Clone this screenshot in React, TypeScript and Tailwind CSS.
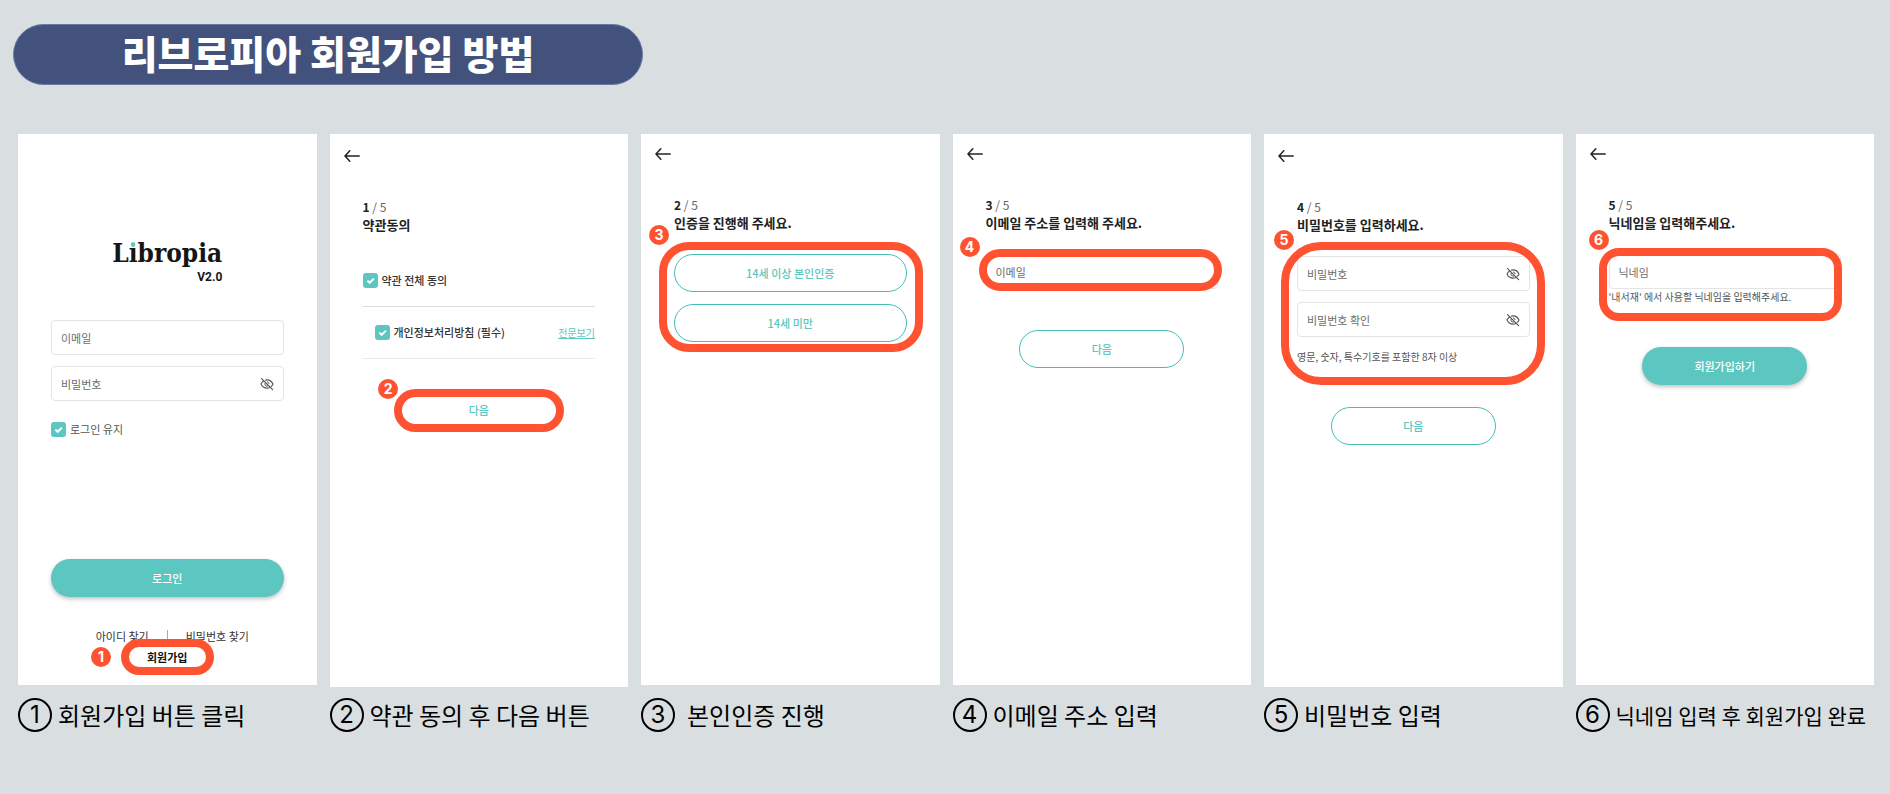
import { ReactNode } from "react";
import { clsx } from "clsx";

interface StepProps {
  number: string;
  caption: string;
  captionClass?: string;
  children: ReactNode;
}

const Step = ({ number, caption, captionClass = "gap-1.5 text-2xl", children }: StepProps) => (
  <figure className="flex min-w-0 flex-col">
    <div className="min-h-[553px]">{children}</div>
    <figcaption className={clsx("mt-[11px] flex items-center whitespace-nowrap text-black", captionClass)}>
      <span className="flex size-[34px] shrink-0 items-center justify-center rounded-full border-2 border-black font-[Inter] text-2xl leading-none">
        {number}
      </span>
      <span className="leading-8">{caption}</span>
    </figcaption>
  </figure>
);

const BackButton = () => (
  <button type="button" aria-label="뒤로" className="mx-[14px] block">
    <svg viewBox="0 0 16 12" className="h-3 w-4" fill="none" stroke="#222" strokeWidth="1.5" strokeLinecap="round" strokeLinejoin="round">
      <path d="M15.2 6H1.2M5.8 .8L1 6l4.8 5.2" />
    </svg>
  </button>
);

const EyeOff = () => (
  <svg viewBox="0 0 14 14" className="size-[14px]" fill="none" stroke="currentColor" strokeLinecap="round" strokeLinejoin="round">
    <path d="M1.6 1.6l11 11" strokeWidth="1.2" />
    <path d="M3.6 4C2.4 4.9 1.5 6 1 7c1.2 2.5 3.5 4.1 6 4.1 1 0 2-.2 2.9-.7M5.5 3.1C6 3 6.5 2.9 7 2.9c2.5 0 4.8 1.6 6 4.1-.4.9-1 1.7-1.8 2.4" strokeWidth="1.1" />
    <path d="M5.3 5.7a2.2 2.2 0 0 0 3 3.1M7.4 4.9a2.2 2.2 0 0 1 1.7 1.7" strokeWidth="1" />
  </svg>
);

interface ScreenProps {
  step: number;
  title: string;
  tall?: boolean;
  children: ReactNode;
}

const Screen = ({ step, title, tall, children }: ScreenProps) => (
  <section className={clsx("bg-white", tall ? "min-h-[553px] pt-4" : "min-h-[551px] pt-[14px]")}>
    <BackButton />
    <div className="px-[33px] pt-[37px]">
      <p className="text-xs leading-4 text-[#666]">
        <b className="font-bold text-[#222]">{step}</b> / 5
      </p>
      <h2 className="mb-[21px] text-[13px] leading-5 font-bold whitespace-nowrap text-[#222]">{title}</h2>
      {children}
    </div>
  </section>
);

// orange outline drawn over the part of the screen to look at
const Ring = ({ className }: { className: string }) => (
  <span className={clsx("pointer-events-none absolute border-8 border-[#ff5230]", className)} />
);

const Badge = ({ n, className }: { n: number; className: string }) => (
  <span
    className={clsx(
      "absolute flex size-5 items-center justify-center rounded-full bg-[#ff5230] font-[Inter] text-sm leading-none font-bold text-white",
      className
    )}
  >
    {n}
  </span>
);

interface FieldProps {
  label: string;
  secret?: boolean;
}

const Field = ({ label, secret }: FieldProps) => (
  <div className="flex h-[35px] items-center rounded-sm border border-[#e4e4e4] px-[9px]">
    <input
      type={secret ? "password" : "text"}
      aria-label={label}
      placeholder={label}
      className="min-w-0 flex-1 text-[11px] leading-4 outline-none placeholder:text-[#6c6c6c]"
    />
    {secret && (
      <button type="button" aria-label="비밀번호 보기" className="text-[#555]">
        <EyeOff />
      </button>
    )}
  </div>
);

const Check = ({ label, className }: { label: string; className?: string }) => (
  <label className={clsx("flex items-center gap-1 text-[11px] leading-[15px] whitespace-nowrap", className)}>
    <span className="grid size-[15px]">
      <input type="checkbox" defaultChecked className="size-[15px] appearance-none rounded-[3px] bg-[#5bc7c0] [grid-area:1/1]" />
      <svg viewBox="0 0 15 15" className="pointer-events-none size-[15px] [grid-area:1/1]" fill="none" stroke="#fff" strokeWidth="2">
        <path d="M4.4 7.6l2.3 2.2 4.2-4.2" />
      </svg>
    </span>
    {label}
  </label>
);

const OutlineButton = ({ children, className }: { children: ReactNode; className: string }) => (
  <button
    type="button"
    className={clsx("block h-[38px] rounded-full border border-[#46bdb5] text-[11px] font-medium text-[#5bc7c0]", className)}
  >
    {children}
  </button>
);

const SolidButton = ({ children, className }: { children: ReactNode; className: string }) => (
  <button
    type="button"
    className={clsx(
      "block h-[38px] rounded-full bg-[#5bc7c0] text-[11px] font-medium text-white shadow-[0_2px_4px_rgba(0,0,0,0.25)]",
      className
    )}
  >
    {children}
  </button>
);

const LoginScreen = () => (
  <section className="flex min-h-[551px] flex-col bg-white px-[33px] pt-[103px] pb-[18px] text-[#444]">
    <div className="mx-auto flex flex-col items-end text-[#161616]">
      <h2 className="font-['DejaVu_Serif_Condensed','DejaVu_Serif',serif] text-[26px] leading-8 font-bold">
        L<span className="bg-linear-to-b from-[#5bc7c0] from-35% to-[#161616] to-35% bg-clip-text text-transparent">i</span>bropia
      </h2>
      <span className="font-[Roboto] text-xs leading-4 font-bold">V2.0</span>
    </div>
    <div className="mt-[35px] flex flex-col gap-[11px]">
      <Field label="이메일" />
      <Field label="비밀번호" secret />
    </div>
    <Check label="로그인 유지" className="mt-[21px] self-start text-[#555]" />
    <SolidButton className="mt-auto w-full">로그인</SolidButton>
    <div className="relative mt-[29px] text-[11px] text-[#333]">
      <nav className="grid grid-cols-[1fr_auto_1fr] items-center gap-[18px] leading-5">
        <a href="#find-id" className="justify-self-end">아이디 찾기</a>
        <span className="h-3 w-px bg-[#aaa]" />
        <a href="#find-password">비밀번호 찾기</a>
      </nav>
      <a href="#join" className="mx-auto mt-px block w-fit leading-5 font-bold text-[#111]">회원가입</a>
      <Ring className="top-[13px] left-[70px] h-9 w-[93px] rounded-full" />
      <Badge n={1} className="top-[21px] left-10" />
    </div>
  </section>
);

export default function App() {
  return (
    <main className="min-h-screen bg-[#d9dee0] pt-6 pb-14 font-['Noto_Sans_CJK_KR',sans-serif]">
      <h1 className="ml-[13px] flex h-[61px] w-1/3 items-center justify-center rounded-full border border-[#6378a5] bg-[#42527c] pb-1 text-[39px] leading-none font-black whitespace-nowrap text-white">
        리브로피아 회원가입 방법
      </h1>

      <div className="mt-[49px] grid grid-cols-6 gap-[13px] pr-4 pl-[18px]">
        <Step number="1" caption="회원가입 버튼 클릭">
          <LoginScreen />
        </Step>

        <Step number="2" caption="약관 동의 후 다음 버튼">
          <Screen step={1} title="약관동의" tall>
            <div className="mt-[38px] border-b border-[#ddd] pb-[18px] text-[#333]">
              <Check label="약관 전체 동의" className="w-fit font-medium" />
            </div>
            <div className="flex items-center justify-between border-b border-[#eaeaea] py-[18px] pl-3 text-[#333]">
              <Check label="개인정보처리방침 (필수)" className="font-medium" />
              <a href="#terms" className="text-[10px] leading-[15px] text-[#5bc7c0] underline">전문보기</a>
            </div>
            <div className="relative mx-auto mt-8 w-[165px]">
              <OutlineButton className="w-full">다음</OutlineButton>
              <Ring className="-top-0.5 -right-[3px] -bottom-[3px] -left-0.5 rounded-full" />
              <Badge n={2} className="-top-3 -left-[18px]" />
            </div>
          </Screen>
        </Step>

        <Step number="3" caption="본인인증 진행" captionClass="gap-3 text-2xl">
          <Screen step={2} title="인증을 진행해 주세요.">
            <div className="relative flex flex-col gap-3">
              <OutlineButton className="w-full">14세 이상 본인인증</OutlineButton>
              <OutlineButton className="w-full">14세 미만</OutlineButton>
              <Ring className="-top-3 -right-4 -bottom-[10px] -left-[15px] rounded-[30px]" />
              <Badge n={3} className="-top-[29px] -left-[25px]" />
            </div>
          </Screen>
        </Step>

        <Step number="4" caption="이메일 주소 입력">
          <Screen step={3} title="이메일 주소를 입력해 주세요.">
            <div className="relative">
              <Field label="이메일" />
              <Ring className="-top-[5px] -right-1 -bottom-0.5 -left-[7px] rounded-full" />
              <Badge n={4} className="-top-[17px] -left-[26px]" />
            </div>
            <OutlineButton className="mx-auto mt-[41px] w-[165px]">다음</OutlineButton>
          </Screen>
        </Step>

        <Step number="5" caption="비밀번호 입력">
          <Screen step={4} title="비밀번호를 입력하세요." tall>
            <div className="relative flex flex-col">
              <Field label="비밀번호" secret />
              <div className="mt-[11px]">
                <Field label="비밀번호 확인" secret />
              </div>
              <p className="mt-3 text-[10px] leading-4 whitespace-nowrap text-[#555]">영문, 숫자, 특수기호를 포함한 8자 이상</p>
              <Ring className="-top-[14px] -right-[15px] -bottom-5 -left-4 rounded-[40px]" />
              <Badge n={5} className="-top-[26px] -left-[23px]" />
            </div>
            <OutlineButton className="mx-auto mt-[42px] w-[165px]">다음</OutlineButton>
          </Screen>
        </Step>

        <Step number="6" caption="닉네임 입력 후 회원가입 완료" captionClass="gap-1.5 text-[21px]">
          <Screen step={5} title="닉네임을 입력해주세요.">
            <div className="relative">
              <Field label="닉네임" />
              <p className="text-[10px] leading-4 whitespace-nowrap text-[#555]">'내서재' 에서 사용할 닉네임을 입력해주세요.</p>
              <Ring className="-top-1.5 -right-px -bottom-4 -left-[10px] rounded-[20px]" />
              <Badge n={6} className="-top-6 -left-5" />
            </div>
            <SolidButton className="mx-auto mt-[42px] w-[165px]">회원가입하기</SolidButton>
          </Screen>
        </Step>
      </div>
    </main>
  );
}
